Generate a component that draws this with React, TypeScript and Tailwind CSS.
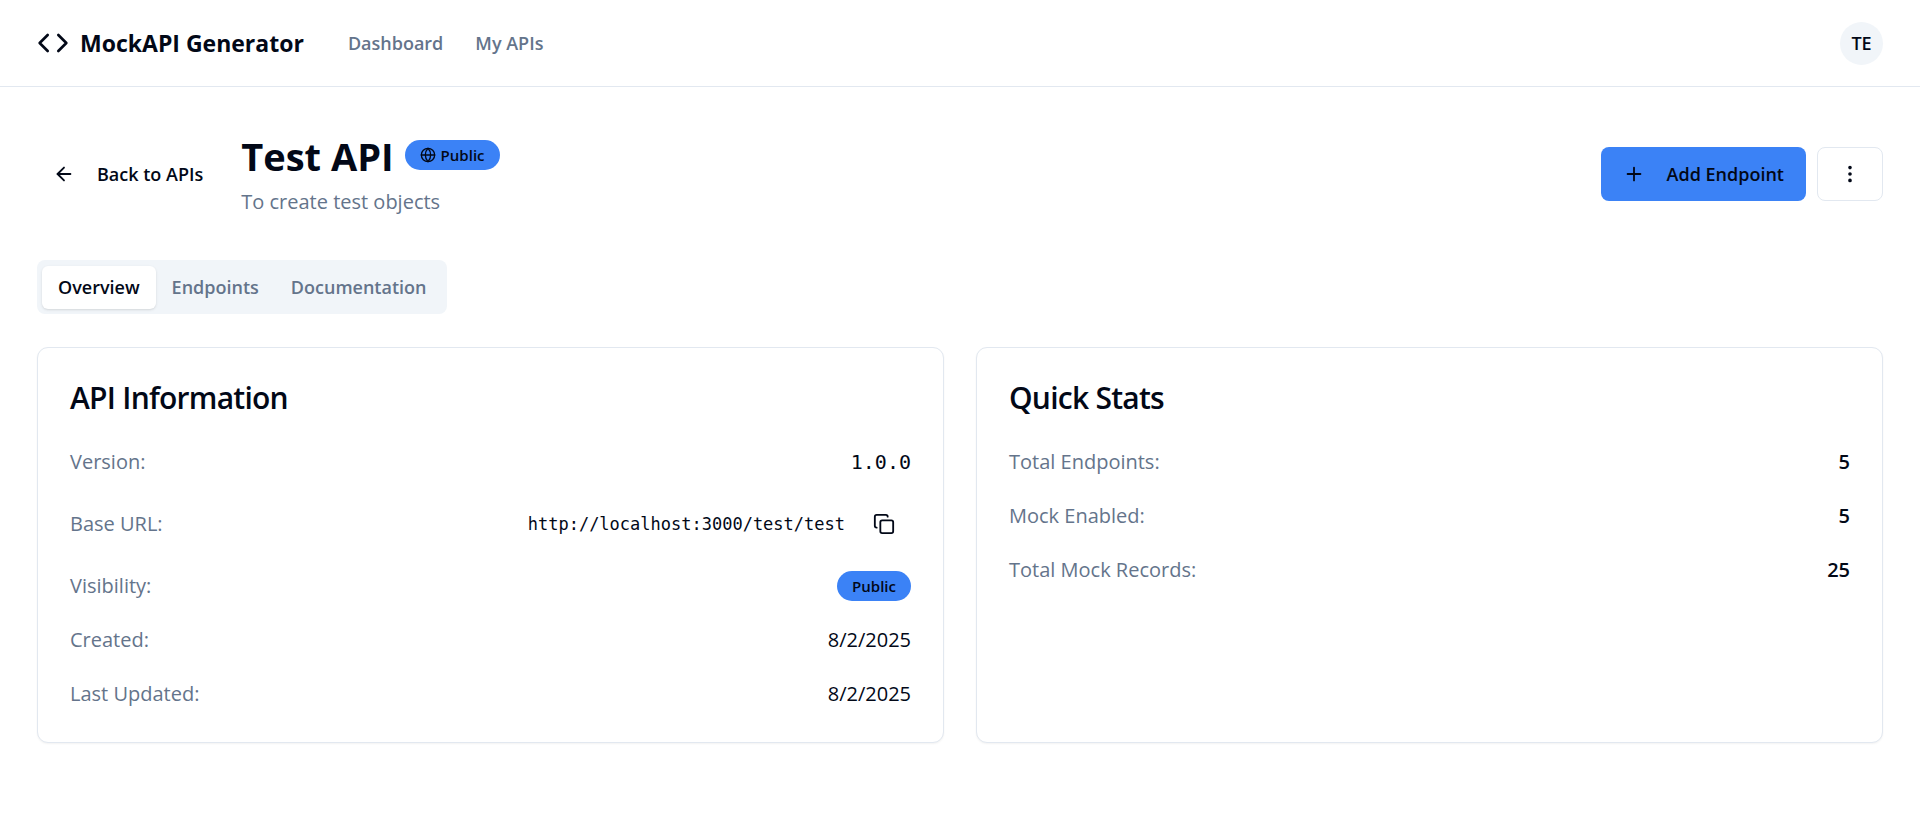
import { useState } from "react";
import type { ReactNode } from "react";
import { ArrowLeft, Code, Copy, EllipsisVertical, Globe, Plus } from "lucide-react";

const BASE_URL = "http://localhost:3000/test/test";
const TABS = ["Overview", "Endpoints", "Documentation"];

function Badge({ children }: { children: ReactNode }) {
  return (
    <span className="inline-flex h-[30px] items-center gap-[5px] rounded-full bg-[#3b82f6] px-[15px] text-[15px] font-semibold leading-5">
      {children}
    </span>
  );
}

function Card({ title, children }: { title: string; children: ReactNode }) {
  return (
    <section className="rounded-[11px] border border-[#e2e8f0] bg-white p-8 shadow-xs">
      <h2 className="text-[30px] font-semibold leading-9 tracking-tight">{title}</h2>
      <dl className="mt-[30px] flex flex-col gap-[22px]">{children}</dl>
    </section>
  );
}

function Row({ label, children }: { label: string; children: ReactNode }) {
  return (
    <div className="flex items-center justify-between">
      <dt className="text-[#64748b]">{label}</dt>
      <dd className="flex items-center">{children}</dd>
    </div>
  );
}

export default function App() {
  const [tab, setTab] = useState("Overview");

  return (
    <div className="min-h-screen bg-white font-['Open_Sans',sans-serif] text-[20px] leading-8 text-[#020817]">
      <header className="flex h-[87px] items-center justify-between border-b border-[#e2e8f0] px-[37px]">
        <div className="flex items-center">
          <a href="#" className="flex items-center gap-[11px] text-[23px] font-bold">
            <Code className="size-8" />
            MockAPI Generator
          </a>
          <nav className="ml-11 flex items-center gap-8 text-[18px] font-semibold text-[#64748b]">
            <a href="#dashboard">Dashboard</a>
            <a href="#apis">My APIs</a>
          </nav>
        </div>
        <button className="flex size-[43px] items-center justify-center rounded-full bg-[#f1f5f9] text-[18px] font-semibold">
          TE
        </button>
      </header>

      <main className="px-[37px] pt-[43px]">
        <div className="flex items-center justify-between">
          <div className="flex items-center gap-[22px]">
            <button className="flex h-12 items-center gap-[22px] px-4 text-[18px] font-semibold">
              <ArrowLeft className="size-[22px]" />
              Back to APIs
            </button>
            <div>
              <div className="flex items-start gap-[11px]">
                <h1 className="text-[38px] font-bold leading-[52px]">Test API</h1>
                <div className="flex pt-[10px]">
                  <Badge>
                    <Globe className="size-4" />
                    Public
                  </Badge>
                </div>
              </div>
              <p className="mt-1 text-[#64748b]">To create test objects</p>
            </div>
          </div>
          <div className="flex gap-[11px]">
            <button className="flex h-[54px] items-center gap-[22px] rounded-lg bg-[#3b82f6] px-[22px] text-[18px] font-semibold">
              <Plus className="size-[22px]" />
              Add Endpoint
            </button>
            <button
              aria-label="More actions"
              className="flex h-[54px] w-[66px] items-center justify-center rounded-lg border border-[#e2e8f0]"
            >
              <EllipsisVertical className="size-[22px]" />
            </button>
          </div>
        </div>

        <div role="tablist" className="mt-[42px] inline-flex h-[54px] items-center rounded-lg bg-[#f1f5f9] p-[5px] text-[18px] font-semibold">
          {TABS.map((name) => (
            <button
              key={name}
              role="tab"
              aria-selected={tab === name}
              onClick={() => setTab(name)}
              className={
                tab === name
                  ? "h-[43px] rounded-md bg-white px-4 shadow-sm"
                  : "h-[43px] rounded-md px-4 text-[#64748b]"
              }
            >
              {name}
            </button>
          ))}
        </div>

        <div className="mt-[33px] grid grid-cols-2 gap-8">
          <Card title="API Information">
            <Row label="Version:">
              <span className="font-['DejaVu_Sans_Mono',monospace]">1.0.0</span>
            </Row>
            <Row label="Base URL:">
              <code className="font-['DejaVu_Sans_Mono',monospace] text-[17px]">{BASE_URL}</code>
              <button
                aria-label="Copy base URL"
                onClick={() => navigator.clipboard?.writeText(BASE_URL)}
                className="ml-3 flex h-12 items-center px-4"
              >
                <Copy className="size-[22px]" />
              </button>
            </Row>
            <Row label="Visibility:">
              <Badge>Public</Badge>
            </Row>
            <Row label="Created:">8/2/2025</Row>
            <Row label="Last Updated:">8/2/2025</Row>
          </Card>
          <Card title="Quick Stats">
            <Row label="Total Endpoints:">
              <span className="font-semibold">5</span>
            </Row>
            <Row label="Mock Enabled:">
              <span className="font-semibold">5</span>
            </Row>
            <Row label="Total Mock Records:">
              <span className="font-semibold">25</span>
            </Row>
          </Card>
        </div>
      </main>
    </div>
  );
}
